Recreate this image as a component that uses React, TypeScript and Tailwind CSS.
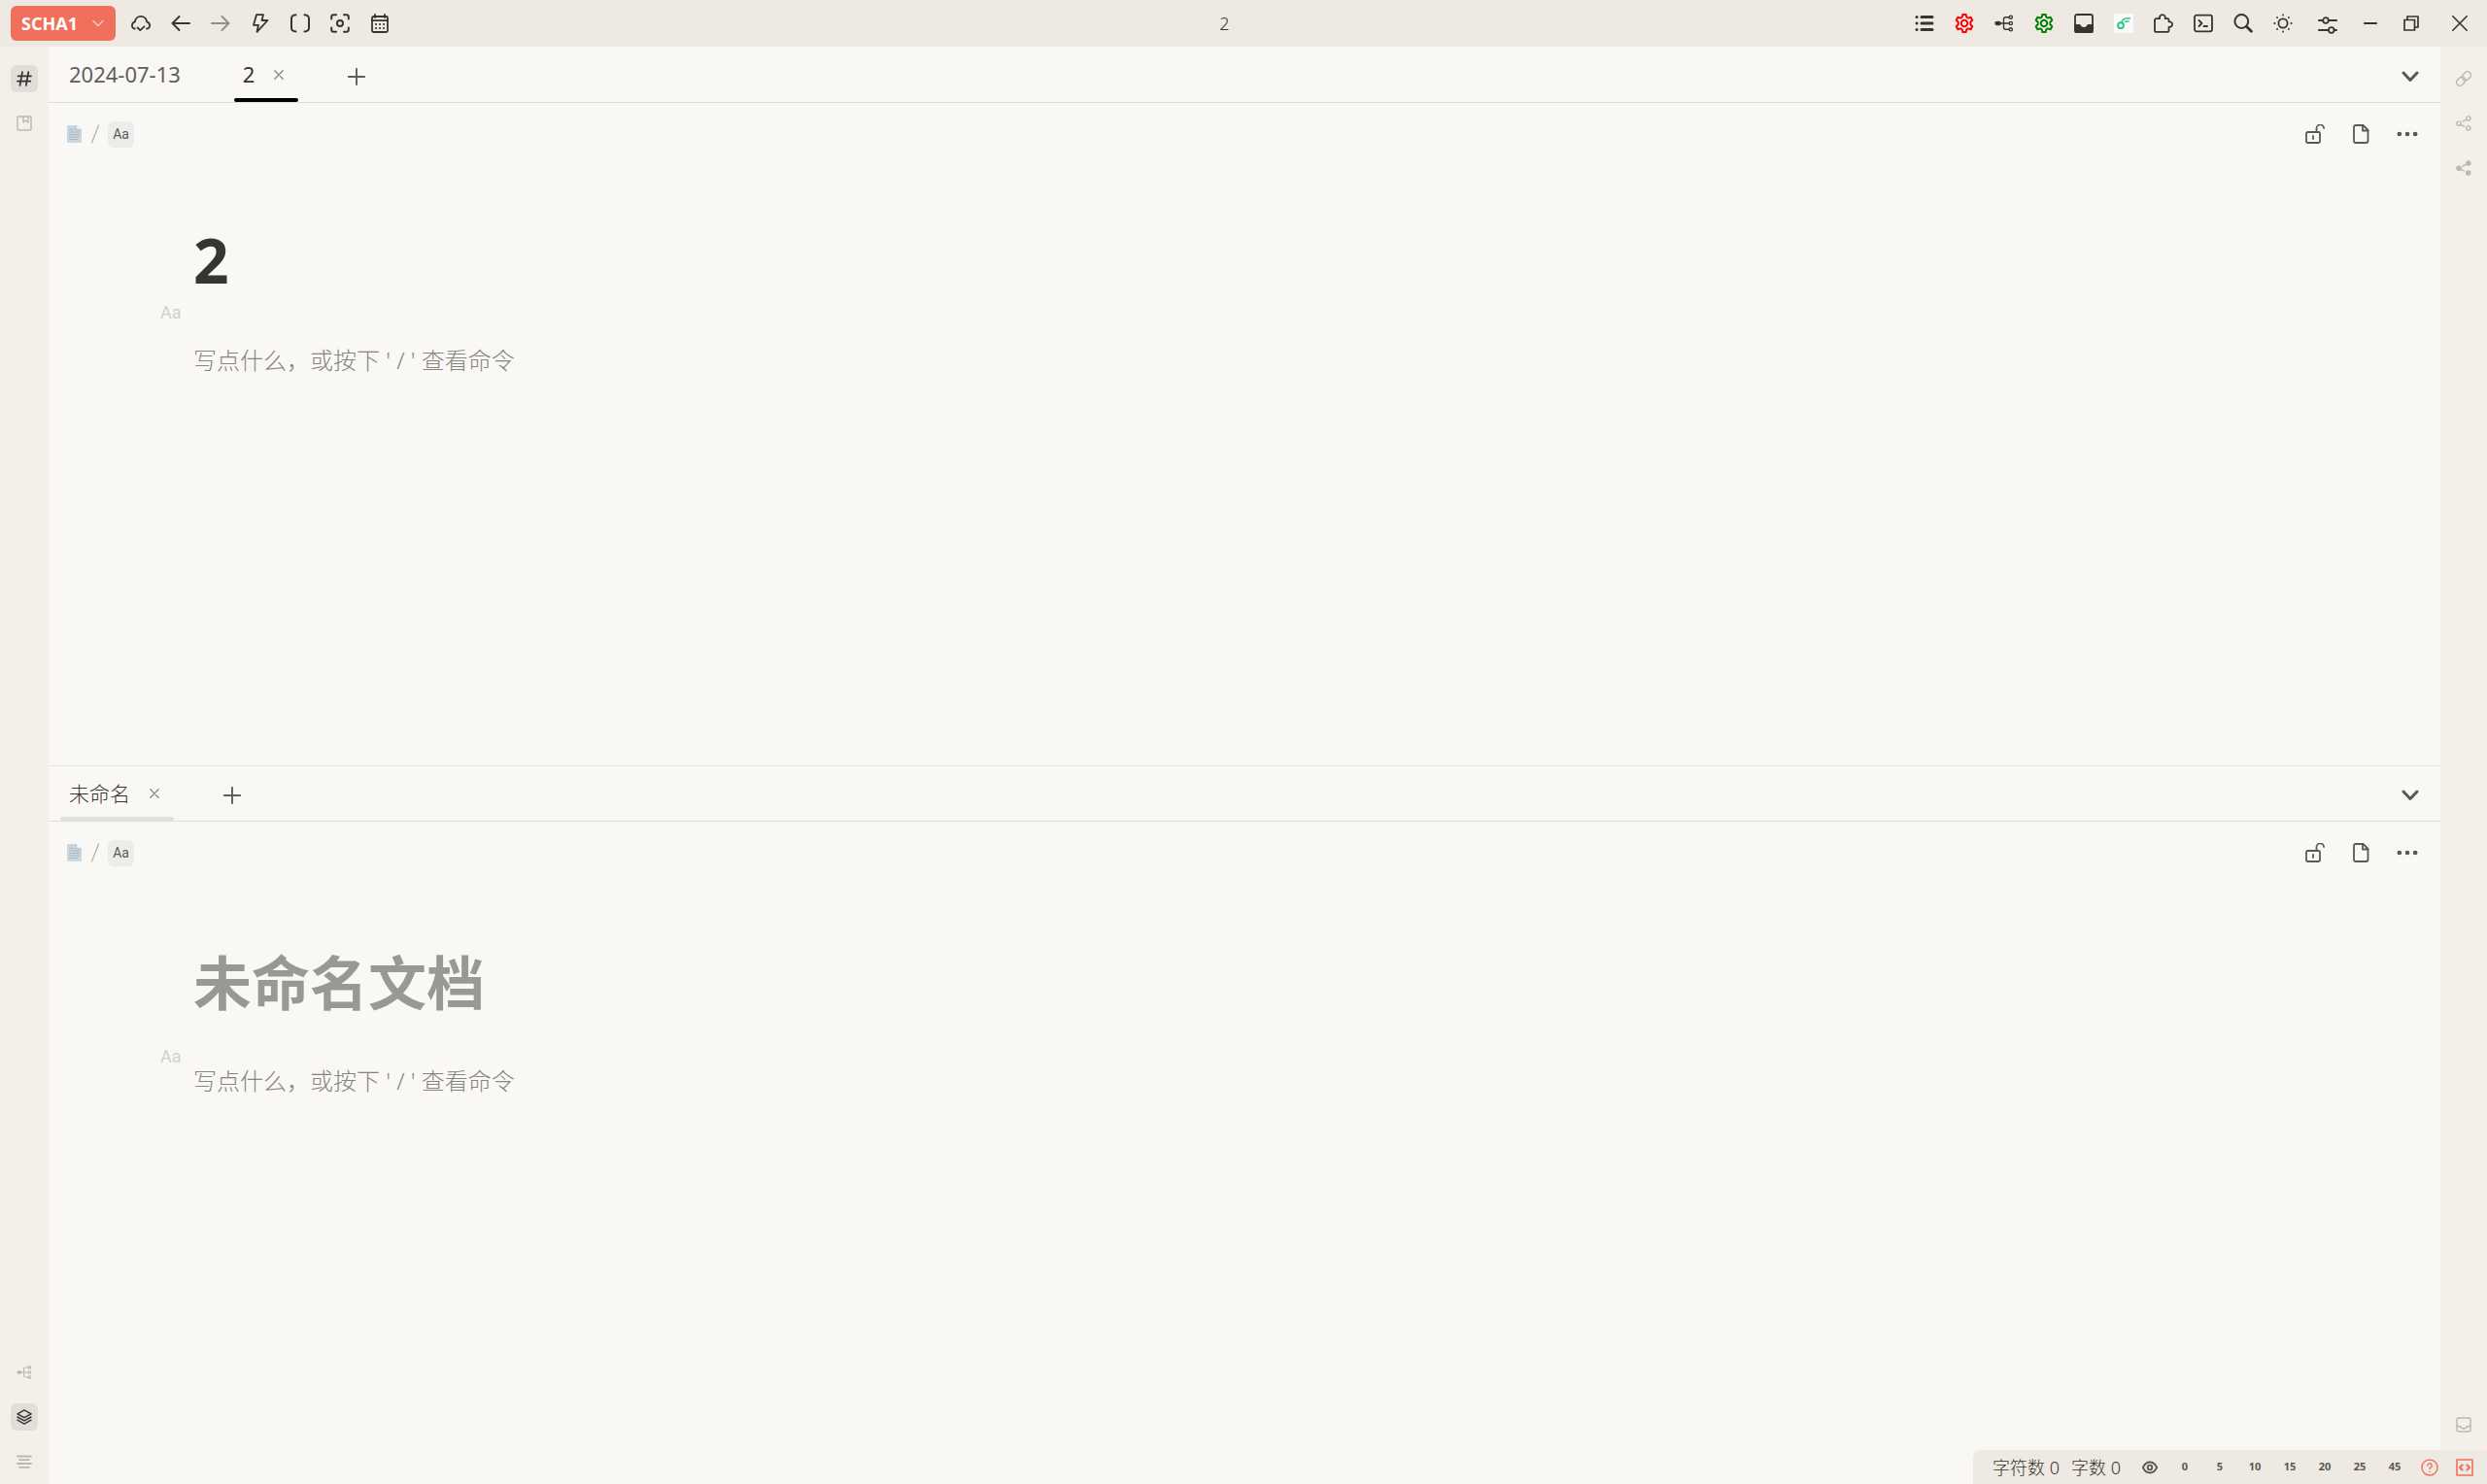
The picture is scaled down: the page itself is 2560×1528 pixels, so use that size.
import React from "react";
import clsx from "clsx";

type IconProps = {
  children: React.ReactNode;
  className?: string;
  box?: string;
  stroke?: number;
};

// Stroke based icon, drawn on a 20px grid unless told otherwise
function Icon({ children, className = "size-5", box = "0 0 20 20", stroke = 1.8 }: IconProps) {
  return (
    <svg
      viewBox={box}
      className={clsx("shrink-0", className)}
      fill="none"
      stroke="currentColor"
      strokeWidth={stroke}
      strokeLinecap="round"
      strokeLinejoin="round"
      aria-hidden="true"
    >
      {children}
    </svg>
  );
}

const Gear = () => (
  <Icon stroke={2}>
    <path d="M8.3 1h3.4l.6 2.6 1.7 1 2.6-.8 1.7 3-2 1.9v2.6l2 1.9-1.7 3-2.6-.8-1.7 1-.6 2.6H8.3l-.6-2.6-1.7-1-2.6.8-1.7-3 2-1.9V8.7l-2-1.9 1.7-3 2.6.8 1.7-1z" />
    <circle cx="10" cy="10" r="3.2" />
  </Icon>
);

const Tree = ({ className }: { className?: string }) => (
  <Icon className={className} stroke={1.4}>
    <ellipse cx="3.6" cy="10" rx="2.6" ry="1.6" fill="currentColor" />
    <path d="M6 10h9M15 3.7h-3.5q-2 0-2 2v8.6q0 2 2 2H15" />
    <circle cx="16.8" cy="3.7" r="1.6" />
    <circle cx="16.8" cy="10" r="1.6" />
    <circle cx="16.8" cy="16.3" r="1.6" />
  </Icon>
);

const Share = ({ filled }: { filled?: boolean }) => (
  <Icon className="size-4" box="0 0 16 16" stroke={1.4}>
    <g fill={filled ? "currentColor" : "none"}>
      <circle cx="3" cy="8.2" r="2.1" />
      <circle cx="12.8" cy="3" r="2.1" />
      <circle cx="12.8" cy="13" r="2.1" />
    </g>
    <path d="M7 6l2.8-1.4M5 9.4l3.5 1.8" />
  </Icon>
);

const leftTools = [
  {
    label: "云端同步",
    icon: (
      <Icon>
        <path d="M3.8 15.5H3A3.2 3.2 0 0 1 .9 12.5Q.9 9.2 3.9 8.3C4.2 5 6.800 2.800 10 2.800s5.800 2.200 6.100 5.500q3 .9 3 4.200a3.200 3.200 0 0 1-2.100 3H16" />
        <path d="M6.6 14.500l2.700 2.700 4.200-3.900" />
      </Icon>
    ),
  },
  { label: "后退", icon: <Icon stroke={1.9}><path d="M19 10H1.5M8.5 3L1.5 10l7 7" /></Icon> },
  { label: "前进", dim: true, icon: <Icon stroke={1.9}><path d="M1 10h17.5M11.5 3l7 7-7 7" /></Icon> },
  { label: "闪电", icon: <Icon><path d="M6 1.2h7L11.5 7H17.5L6.5 18.8 8 11.8H3z" /></Icon> },
  { label: "括号", icon: <Icon stroke={2}><path d="M5.500 1.300q-4.500 .3-4.500 4v9.200q0 3.700 4.500 4M14.500 1.300q4.500 .3 4.500 4v9.200q0 3.700-4.500 4" /></Icon> },
  {
    label: "聚焦",
    icon: (
      <Icon stroke={2}>
        <path d="M1.2 5.500v-2q0-2.300 2.300-2.300h2.500M14 1.200h2.500q2.300 0 2.300 2.300v2M18.800 14.500v2q0 2.300-2.300 2.300H14M6 18.800H3.500q-2.300 0-2.300-2.300v-2" />
        <circle cx="10" cy="10" r="3" />
      </Icon>
    ),
  },
  {
    label: "日历",
    icon: (
      <Icon>
        <rect x="2" y="3" width="16" height="16" rx="1.5" />
        <path d="M2 7.200h16M5 1v3M15 1v3" />
        <path d="M6 11h.1M10 11h.1M14 11h.1M6 15h.1M10 15h.1M14 15h.1" strokeWidth="2.1" />
      </Icon>
    ),
  },
];

const rightTools = [
  {
    label: "大纲",
    icon: (
      <Icon stroke={3}>
        <path d="M7 3.5h11M7 10h11M7 16.5h11" />
        <path d="M2 3.5h.1M2 10h.1M2 16.5h.1" />
      </Icon>
    ),
  },
  { label: "设置一", color: "text-[#ff0000]", icon: <Gear /> },
  { label: "关系树", icon: <Tree /> },
  { label: "设置二", color: "text-[#008000]", icon: <Gear /> },
  {
    label: "收集箱",
    icon: (
      <Icon stroke={1.8}>
        <rect x="1" y="1" width="18" height="18" rx="2" />
        <path d="M1 12h4.500q1.500 3 4.500 3t4.500-3H19v6q0 1-1 1H2q-1 0-1-1z" fill="currentColor" />
      </Icon>
    ),
  },
  {
    label: "插件",
    icon: (
      <span className="flex size-5 items-center justify-center bg-[#fafafa] text-[#2ecc80]">
        <Icon stroke={2}>
          <circle cx="7" cy="12.2" r="2.9" />
          <path d="M9.400 10.800L8 8.800" />
          <path d="M8 8.500q1.500-3.300 4.500-3.500l4-.3M11.500 8.300l3.500-.2" strokeWidth="1.5" />
        </Icon>
      </span>
    ),
  },
  {
    label: "集市",
    icon: (
      <Icon>
        <path d="M2.800 5.200h3.300a3 3 0 1 1 5.600 0H14q1.500 0 1.500 1.500v1.700a2.800 2.800 0 1 1 0 5.400v3.600q0 1.500-1.500 1.500H2.500Q1 18.900 1 17.400V6.700Q1 5.200 2.800 5.200z" />
      </Icon>
    ),
  },
  {
    label: "命令面板",
    icon: (
      <Icon>
        <rect x="1" y="1.7" width="18" height="16.6" rx="2" />
        <path d="M5.5 7l3 3-3 3M10.5 13h3.5" />
      </Icon>
    ),
  },
  { label: "搜索", icon: <Icon stroke={2}><circle cx="8.3" cy="8" r="6.9" /><path d="M13.4 13.2l5 5" strokeWidth="2.8" /></Icon> },
  {
    label: "外观",
    icon: (
      <Icon stroke={1.8}>
        <circle cx="10" cy="10" r="4.6" />
        <path d="M10 1.3v.3M10 18.4v.3M1.300 10h.3M18.400 10h.3M4 4l.1.1M15.900 4.100l.1-.1M4 16l.1-.1M15.900 15.900l.1.1" />
      </Icon>
    ),
  },
];

function Header() {
  return (
    <header className="flex h-12 shrink-0 items-center bg-[#eee9e3] text-[#37352f]">
      <button className="ml-[11px] mr-[5px] flex h-9 w-27 items-center justify-between rounded-md bg-[#f0705c] pl-[11px] pr-3 text-lg font-bold text-white">
        SCHA1
        <Icon className="h-2 w-3 opacity-60" box="0 0 12 8" stroke={1.5}>
          <path d="M1 1.5l5 5 5-5" />
        </Icon>
      </button>
      {leftTools.map((t) => (
        <button key={t.label} aria-label={t.label} className={clsx("flex h-12 w-[41px] items-center justify-center", t.dim && "opacity-50")}>
          {t.icon}
        </button>
      ))}
      <div className="flex-1 pl-[150px] text-center text-lg font-light">2</div>
      {rightTools.map((t) => (
        <button key={t.label} aria-label={t.label} className={clsx("flex h-12 w-[41px] items-center justify-center", t.color)}>
          {t.icon}
        </button>
      ))}
      <button aria-label="布局" className="ml-[2px] flex h-12 w-12 items-center justify-center pt-1">
        <Icon>
          <path d="M.9 5H5M11.5 5h7.600M.9 15h9.600M17 15h2.100" />
          <circle cx="8" cy="5" r="2.8" />
          <circle cx="13.8" cy="15" r="2.8" />
        </Icon>
      </button>
      <button aria-label="最小化" className="flex h-12 w-10 items-center justify-center">
        <Icon className="size-4" box="0 0 16 16" stroke={2}><path d="M2 8h12" /></Icon>
      </button>
      <button aria-label="还原" className="flex h-12 w-11 items-center justify-center">
        <Icon className="size-4" box="0 0 16 16" stroke={1.7}>
          <path d="M1 4.5h10.5V15H1zM4 4V1h11v11h-3" strokeLinejoin="miter" />
        </Icon>
      </button>
      <button aria-label="关闭" className="flex h-12 w-14 items-center justify-center">
        <Icon className="size-4" box="0 0 16 16" stroke={1.6}><path d="M.8.8l14.400 14.400M15.200.8L.8 15.200" /></Icon>
      </button>
    </header>
  );
}

type DockItem = { label: string; icon: React.ReactNode; active?: boolean };

function DockGroup({ items }: { items: DockItem[] }) {
  return (
    <div className="flex flex-col items-center">
      {items.map((item) => (
        <div key={item.label} className="flex h-[46px] items-center">
          <button
            aria-label={item.label}
            className={clsx("flex size-7 items-center justify-center rounded-md", item.active ? "bg-[#e1ded9] text-[#37352f]" : "text-[#bab7b1]")}
          >
            {item.icon}
          </button>
        </div>
      ))}
    </div>
  );
}

const leftTop: DockItem[] = [
  {
    label: "标签",
    active: true,
    icon: <Icon className="size-4" box="0 0 16 16" stroke={1.7}><path d="M1.500 5.300h13.500M.8 10.700h13.500M6 1L3.500 15M12.300 1L9.800 15" /></Icon>,
  },
  {
    label: "书签",
    icon: (
      <Icon className="size-4" box="0 0 16 16" stroke={1.4}>
        <rect x="1" y="1" width="14" height="14" rx="1" />
        <path d="M7 1v6l2.500-2L12 7V1" />
      </Icon>
    ),
  },
];

const leftBottom: DockItem[] = [
  { label: "关系", icon: <Tree className="size-4" /> },
  {
    label: "图层",
    active: true,
    icon: (
      <Icon className="size-4" box="0 0 16 16" stroke={1.5}>
        <path d="M8 .9l7 3.900-7 3.900-7-3.900z" />
        <path d="M1 8l7 3.900L15 8M1 11.200l7 3.900 7-3.900" />
      </Icon>
    ),
  },
  {
    label: "列表",
    icon: <Icon className="size-4" box="0 0 16 16" stroke={1.8}><path d="M1 2.500h14M3 6.200h10M1 10h14M3 13.800h10" /></Icon>,
  },
];

const rightTop: DockItem[] = [
  {
    label: "反链",
    icon: (
      <Icon className="size-4" box="0 0 16 16" stroke={1.4}>
        <rect x="5.800" y="1.800" width="10" height="7" rx="3.500" transform="rotate(-45 10.800 5.300)" />
        <rect x=".2" y="7.200" width="10" height="7" rx="3.500" transform="rotate(-45 5.200 10.700)" />
      </Icon>
    ),
  },
  { label: "关系图", icon: <Share /> },
  { label: "全局关系图", icon: <Share filled /> },
];

const rightBottom: DockItem[] = [
  {
    label: "收集箱",
    icon: (
      <Icon className="size-4" box="0 0 16 16" stroke={1.4}>
        <rect x="1" y="1" width="14" height="14" rx="1.5" />
        <path d="M1 9.500h3.500Q5.500 12 8 12t3.500-2.500H15" />
      </Icon>
    ),
  },
];

type Tab = { title: string; cjk?: boolean; closable?: boolean; state?: "focus" | "blur" };

function TabItem({ tab }: { tab: Tab }) {
  return (
    <div className="relative flex items-center pl-[9px]">
      <button className={clsx(tab.cjk ? "pt-[2px] text-[21px] font-light" : "text-[22px]", tab.state ? "text-[#37352f]" : "text-[#5f5d58]")}>
        {tab.title}
      </button>
      <div className="flex w-[45px] justify-center pl-1">
        {tab.closable && (
          <button aria-label="关闭页签" className="text-[#8a8883]">
            <Icon className="size-[10px]" box="0 0 10 10" stroke={1.3}><path d="M.8.8l8.400 8.400M9.200.8L.8 9.200" /></Icon>
          </button>
        )}
      </div>
      {tab.state && (
        <span className={clsx("absolute inset-x-0 bottom-0 h-1 rounded-sm", tab.state === "focus" ? "bg-black" : "bg-[#dee0e2]")} />
      )}
    </div>
  );
}

type PaneProps = {
  tabs: Tab[];
  title?: string;
  split?: boolean;
};

function Pane({ tabs, title, split }: PaneProps) {
  return (
    <section className="flex min-h-0 flex-1 flex-col">
      <div className={clsx("flex h-[58px] shrink-0 gap-[10px] border-b border-[#dcdee0] pl-3", split && "border-t border-t-[#e4e4e1]")}>
        {tabs.map((tab) => (
          <TabItem key={tab.title} tab={tab} />
        ))}
        <button aria-label="新建页签" className="flex w-25 items-center justify-center pt-1 text-[#5f5d58]">
          <Icon className="size-[18px]" box="0 0 18 18" stroke={1.9}><path d="M9 .9v16.200M.9 9h16.200" /></Icon>
        </button>
        <button aria-label="页签列表" className="ml-auto mr-2 flex w-[47px] items-center justify-center pt-1 text-[#5a5853]">
          <Icon className="h-3 w-[18px]" box="0 0 18 12" stroke={3}><path d="M2 2l7 7.500L16 2" /></Icon>
        </button>
      </div>

      <div className="flex h-16 shrink-0 items-center pl-[19px] pr-[10px] text-[#5a5853]">
        <svg viewBox="0 0 15 18" className="h-[18px] w-[15px]" aria-hidden="true">
          <path d="M1 0h8l6 5v12q0 1-1 1H1q-1 0-1-1V1q0-1 1-1z" fill="#cbd7de" />
          <path d="M9 0v5h6" fill="#e3ecf1" stroke="#a9bac4" strokeWidth="1" />
          <path d="M2 4.500h4.500M2 7h11M2 9.500h11M2 12h11M2 14.500h9" stroke="#a9bac4" strokeWidth="1" />
        </svg>
        <Icon className="ml-[10px] mr-[9px] h-5 w-2 text-[#b5b3ae]" box="0 0 8 20" stroke={1.3}><path d="M7.500 1L.5 19" /></Icon>
        <button className="size-[27px] rounded-md bg-[#ececea] font-[Roboto] text-sm">Aa</button>
        <div className="ml-auto flex">
          <button aria-label="锁定编辑" className="flex w-[47px] justify-center">
            <Icon>
              <rect x="1" y="8" width="14" height="11" rx="1.5" />
              <path d="M8 12v3M11.500 8V4.500a3.800 3.800 0 0 1 7.600-.5" />
            </Icon>
          </button>
          <button aria-label="文档" className="flex w-12 justify-center">
            <Icon>
              <path d="M5 1h7.500L17.500 6v11q0 2-2 2H5q-2 0-2-2V3q0-2 2-2z" />
              <path d="M12 1v5.500h5.500" />
            </Icon>
          </button>
          <button aria-label="更多" className="flex w-12 justify-center">
            <Icon className="h-5 w-[22px]" box="0 0 22 20" stroke={4.6}><path d="M2.800 10h.1M11 10h.1M19.100 10h.1" /></Icon>
          </button>
        </div>
      </div>

      <div className={clsx("pl-[149px]", split ? "pt-[62px]" : "pt-[58px]")}>
        <input
          aria-label="文档标题"
          defaultValue={title}
          placeholder="未命名文档"
          className={clsx(
            "block h-20 w-full font-bold text-[#37352f] outline-none placeholder:text-[#9a9892]",
            title ? "text-[64px]" : "text-[60px]"
          )}
        />
        <div className={clsx("relative", split ? "mt-10" : "mt-[42px]")}>
          <span className={clsx("absolute -left-[34px] font-[Roboto] text-lg/6 text-[#d2d0cb]", split ? "-top-4" : "-top-10")}>Aa</span>
          <input
            aria-label="正文"
            placeholder="写点什么，或按下 ' / ' 查看命令"
            className="block h-10 w-full text-2xl font-light outline-none placeholder:text-[#87857f]"
          />
        </div>
      </div>
    </section>
  );
}

const presets = [0, 5, 10, 15, 20, 25, 45];

function StatusBar() {
  return (
    <footer className="fixed bottom-0 right-0 flex h-[35px] items-center rounded-tl-lg bg-[#eee9e3] pl-5 pr-[5px] text-[#5a5853]">
      <span className="mr-3 pt-px text-lg font-light text-[#37352f]">字符数 0</span>
      <span className="mr-3 pt-px text-lg font-light text-[#37352f]">字数 0</span>
      <button aria-label="预览" className="flex w-9 justify-center">
        <Icon className="size-4" box="0 0 16 16">
          <path d="M.8 8Q3.500 2.500 8 2.500T15.200 8Q12.500 13.500 8 13.500T.8 8z" />
          <circle cx="8" cy="8" r="2.300" />
        </Icon>
      </button>
      {presets.map((n) => (
        <button key={n} className="w-9 text-center text-[11px] font-bold">
          {n}
        </button>
      ))}
      <button aria-label="帮助" className="flex w-9 justify-center text-[#f0705c]">
        <Icon className="size-[18px]" box="0 0 18 18" stroke={1.4}>
          <circle cx="9" cy="9" r="8" />
          <path d="M6.800 7a2.200 2.200 0 1 1 3.300 1.900Q9 9.500 9 10.500M9 13.200v.1" />
        </Icon>
      </button>
      <button aria-label="代码片段" className="flex w-9 justify-center text-[#f0705c]">
        <Icon className="size-[18px]" box="0 0 18 18" stroke={1.6}>
          <path d="M1 1h16v16H1z" />
          <path d="M6.500 6.500L4 9l2.500 2.500M11.500 6.500L14 9l-2.500 2.500" strokeWidth="2.200" />
        </Icon>
      </button>
    </footer>
  );
}

export default function App() {
  return (
    <div className="flex h-screen flex-col overflow-hidden bg-[#f9f8f4] font-['Noto_Sans','Noto_Sans_CJK_SC',sans-serif]">
      <Header />
      <div className="flex min-h-0 flex-1">
        <aside className="flex w-[50px] shrink-0 flex-col justify-between bg-[#f4f0e9] pt-[10px]">
          <DockGroup items={leftTop} />
          <DockGroup items={leftBottom} />
        </aside>
        <main className="flex min-w-0 flex-1 flex-col">
          <Pane
            title="2"
            tabs={[{ title: "2024-07-13" }, { title: "2", closable: true, state: "focus" }]}
          />
          <Pane split tabs={[{ title: "未命名", cjk: true, closable: true, state: "blur" }]} />
        </main>
        <aside className="flex w-12 shrink-0 flex-col justify-between bg-[#f4f0e9] pb-[38px] pt-[10px]">
          <DockGroup items={rightTop} />
          <DockGroup items={rightBottom} />
        </aside>
      </div>
      <StatusBar />
    </div>
  );
}
